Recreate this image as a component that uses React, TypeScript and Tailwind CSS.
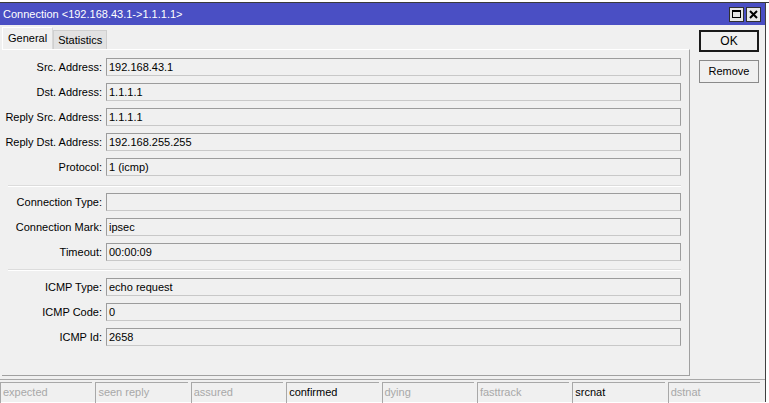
import React from 'react';

const font = { fontFamily: '"Liberation Sans", Arial, sans-serif' };

type Field = { label: string; value: string };

const general: Field[] = [
  { label: 'Src. Address:', value: '192.168.43.1' },
  { label: 'Dst. Address:', value: '1.1.1.1' },
  { label: 'Reply Src. Address:', value: '1.1.1.1' },
  { label: 'Reply Dst. Address:', value: '192.168.255.255' },
  { label: 'Protocol:', value: '1 (icmp)' },
];

const conn: Field[] = [
  { label: 'Connection Type:', value: '' },
  { label: 'Connection Mark:', value: 'ipsec' },
  { label: 'Timeout:', value: '00:00:09' },
];

const icmp: Field[] = [
  { label: 'ICMP Type:', value: 'echo request' },
  { label: 'ICMP Code:', value: '0' },
  { label: 'ICMP Id:', value: '2658' },
];

const flags = [
  { name: 'expected', on: false },
  { name: 'seen reply', on: false },
  { name: 'assured', on: false },
  { name: 'confirmed', on: true },
  { name: 'dying', on: false },
  { name: 'fasttrack', on: false },
  { name: 'srcnat', on: true },
  { name: 'dstnat', on: false },
];

function Row({ label, value }: Field) {
  return (
    <div className="flex items-center h-[18px]">
      <div className="w-[101px] text-right pr-[1px] text-black whitespace-nowrap">{label}</div>
      <div className="ml-[3px] w-[575px] h-[18px] border border-[#9c9c9c] border-b-[#c8c8c8] bg-[#f0f0f0] px-[2px] leading-[16px] text-black whitespace-nowrap">
        {value}
      </div>
    </div>
  );
}

function Section({ rows }: { rows: Field[] }) {
  return (
    <div className="flex flex-col gap-[7px]">
      {rows.map((r) => (
        <Row key={r.label} {...r} />
      ))}
    </div>
  );
}

export default function App() {
  return (
    <div className="w-[769px] h-[403px] bg-white overflow-hidden text-[11px]" style={font}>
      <div className="h-[3px] bg-white border-b border-[#3a3a3a]" />
      <div className="w-[766px] h-[399px] bg-[#f0f0f0] border-r border-[#404040] flex flex-col">
        {/* title bar */}
        <div className="h-[22px] bg-[#4a4fc4] flex items-center pl-[3px] pr-[4px]">
          <span className="text-white text-[11px]">Connection &lt;192.168.43.1-&gt;1.1.1.1&gt;</span>
          <div className="ml-auto flex gap-[2px]">
            <div className="w-[15px] h-[15px] bg-[#e8e8e8] border border-[#303030] flex items-center justify-center">
              <div className="w-[9px] h-[8px] border border-black border-t-2" />
            </div>
            <div className="w-[15px] h-[15px] bg-[#e8e8e8] border border-[#303030] flex items-center justify-center">
              <svg width="9" height="9" viewBox="0 0 9 9">
                <path d="M1 1 L8 8 M8 1 L1 8" stroke="black" strokeWidth="2" />
              </svg>
            </div>
          </div>
        </div>

        <div className="flex flex-1">
          {/* left: tabs + panel */}
          <div className="flex flex-col pl-[2px] pt-[2px]">
            <div className="flex items-end h-[22px]">
              <div className="h-[22px] px-[5px] flex items-center bg-[#f0f0f0] border border-b-0 border-[#d8d8d8] border-t-white border-l-white text-black">
                General
              </div>
              <div className="h-[19px] px-[4px] flex items-center bg-[#e2e2e2] border border-b-0 border-[#cfcfcf] text-black">
                Statistics
              </div>
            </div>
            <div className="w-[688px] h-[327px] border-r border-b border-[#a0a0a0] border-t border-t-white pt-[8px] flex flex-col">
              <Section rows={general} />
              <div className="ml-[6px] w-[673px] h-[2px] border-t border-[#dcdcdc] border-b border-b-white mt-[9px] mb-[6px]" />
              <Section rows={conn} />
              <div className="ml-[6px] w-[673px] h-[2px] border-t border-[#dcdcdc] border-b border-b-white mt-[8px] mb-[7px]" />
              <Section rows={icmp} />
            </div>
          </div>

          {/* right buttons */}
          <div className="flex flex-col pl-[9px] pt-[5px] gap-[8px]">
            <div className="w-[60px] h-[22px] border-2 border-[#1a1a1a] bg-[#f0f0f0] flex items-center justify-center text-black text-[12px]">
              OK
            </div>
            <div className="w-[60px] h-[23px] border border-[#8a8a8a] bg-[#f0f0f0] flex items-center justify-center text-black">
              Remove
            </div>
          </div>
        </div>

        {/* status bar */}
        <div className="border-t border-[#a8a8a8] pt-[2px] h-[23px] grid grid-cols-8 gap-[3px] pr-[5px]">
          {flags.map((f) => (
            <div
              key={f.name}
              className={`h-[21px] border-t border-l border-[#a8a8a8] pl-[2px] leading-[19px] ${f.on ? 'text-black' : 'text-[#a8a8a8]'}`}
            >
              {f.name}
            </div>
          ))}
        </div>
      </div>
    </div>
  );
}
